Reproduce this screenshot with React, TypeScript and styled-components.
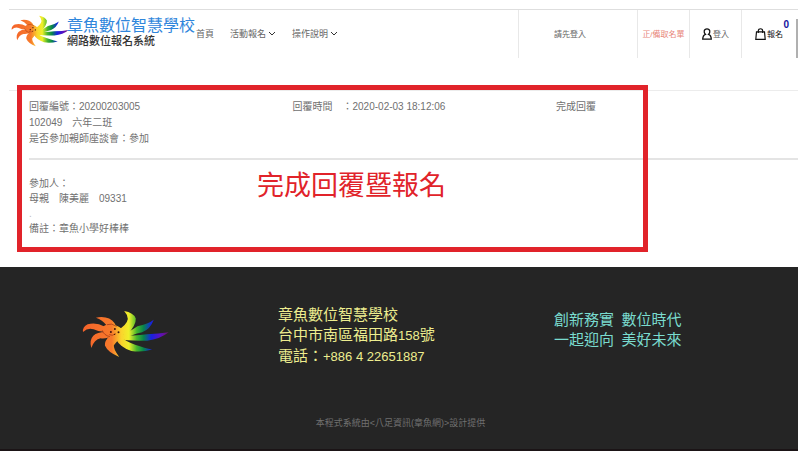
import React from "react";
import styled, { createGlobalStyle } from "styled-components";

const GlobalStyle = createGlobalStyle`
  * { box-sizing: border-box; }
  body {
    margin: 0;
    background: #fff;
    color: #707070;
    font-family: "Liberation Sans", "Noto Sans CJK TC", sans-serif;
    font-size: 10px;
    line-height: 15px;
  }
  p, h1, h2 { margin: 0; font-weight: 400; }
  a { color: inherit; text-decoration: none; }
`;

const Page = styled.div`
  display: flex;
  flex-direction: column;
  min-height: 100vh;
  padding-right: 2px;
`;

const Header = styled.header`
  display: flex;
  height: 49px;
  margin: 9px 0 0 9px;
  border-top: 1px solid #dedede;
`;

const Brand = styled.a`
  display: flex;
  align-items: flex-start;
  padding: 5px 0 0 2px;
`;

const BrandText = styled.span`
  display: flex;
  flex-direction: column;
  margin-left: -2px;
  padding-top: 3px;
`;

const BrandName = styled.span`
  color: #2f86dc;
  font-size: 16px;
  line-height: 16px;
  white-space: nowrap;
`;

const BrandSub = styled.span`
  color: #333;
  font-size: 11px;
  font-weight: 500;
  line-height: 14px;
  white-space: nowrap;
`;

const Nav = styled.nav`
  display: flex;
  flex: 1;
  align-items: center;
  gap: 16px;
  padding-left: 1px;
  font-size: 9px;
  white-space: nowrap;
`;

const NavLink = styled.a`
  color: #666;
`;

const NavButton = styled.button`
  display: flex;
  align-items: center;
  gap: 2px;
  padding: 0;
  border: 0;
  background: none;
  color: #666;
  font: inherit;
`;

const Tools = styled.div`
  display: flex;
  border-right: 2px solid #bdbdbd;
  border-image: linear-gradient(#fff 20%, #b0b0b0 20%) 1;
`;

const Tool = styled.a<{ $wide?: boolean; $color?: string }>`
  display: flex;
  align-items: center;
  justify-content: ${(p) => (p.$wide ? "flex-start" : "center")};
  gap: 1px;
  width: ${(p) => (p.$wide ? 119 : 52)}px;
  padding-left: ${(p) => (p.$wide ? 35 : 0)}px;
  border-left: 1px solid #e8e8e8;
  color: ${(p) => p.$color ?? "#666"};
  font-size: 8px;
  white-space: nowrap;
`;

const Bag = styled(Tool)`
  position: relative;
  width: 55px;
  color: #111;
`;

const Badge = styled.span`
  position: absolute;
  top: 7px;
  right: 7px;
  color: #1414a0;
  font-size: 10px;
  font-weight: 700;
`;

const Main = styled.main`
  position: relative;
  margin: 32px 0 0 9px;
  padding: 8px 0 31px 20px;
  border-top: 1px solid #ececec;
`;

const Details = styled.div`
  display: grid;
  grid-template-columns: 1fr 1fr 242px;
  line-height: 16px;
`;

const Rule = styled.hr`
  height: 2px;
  margin: 11px 0 16px;
  border: 0;
  background: #e4e4e4;
`;

const Faint = styled.p`
  color: #bbb;
`;

const Highlight = styled.div`
  position: absolute;
  top: -6px;
  left: 8px;
  width: 80%;
  height: 167px;
  border: 5px solid #e1232a;
  pointer-events: none;
`;

const HighlightText = styled.h2`
  padding: 81px 0 0 235px;
  color: #e1232a;
  font-size: 27px;
  line-height: 30px;
  white-space: nowrap;
`;

const Footer = styled.footer`
  display: flex;
  flex: 1;
  flex-direction: column;
  border-bottom: 2px solid #1b1416;
  background: #252525;
`;

const FooterGrid = styled.div`
  display: grid;
  grid-template-columns: 278fr 276fr 244fr;
  padding-top: 38px;
  font-size: 15px;
  line-height: 20px;
`;

const FooterLogo = styled.div`
  padding: 5px 0 0 82px;
`;

const Address = styled.address`
  color: #eded8f;
  font-style: normal;
`;

const Digits = styled.span`
  font-size: 13px;
`;

const Slogan = styled.div`
  padding-top: 5px;
  color: #7adccf;
`;

const Credit = styled.p`
  margin-top: 49px;
  padding-left: 3px;
  color: #707070;
  font-size: 9px;
  text-align: center;
`;

function Octopus({ width, height, id }: { width: number; height: number; id: string }) {
  return (
    <svg width={width} height={height} viewBox="35 31 262 142" aria-hidden="true">
      <defs>
        <linearGradient id={id} gradientUnits="userSpaceOnUse" x1="36" y1="0" x2="296" y2="0">
          <stop offset="0" stopColor="#f4622a" />
          <stop offset=".34" stopColor="#f77a2b" />
          <stop offset=".45" stopColor="#fbd32c" />
          <stop offset=".54" stopColor="#eef02a" />
          <stop offset=".63" stopColor="#46b52c" />
          <stop offset=".71" stopColor="#07844d" />
          <stop offset=".8" stopColor="#1722e0" />
          <stop offset=".9" stopColor="#5b10c4" />
          <stop offset="1" stopColor="#6d1263" />
        </linearGradient>
      </defs>
      <g fill={`url(#${id})`}>
        <path d="M140 92Q170 76 173 57Q173 45 162 33Q190 38 197 55Q199 75 168 108Z" />
        <path d="M152 106Q175 98 202 79Q235 72 251 59Q241 87 216 97Q184 104 160 118Z" />
        <path d="M145 103Q190 110 230 103Q267 102 296 97Q270 118 231 122Q180 124 145 118Z" />
        <path d="M145 106Q168 126 195 134Q225 144 246 149Q215 158 184 153Q151 143 136 116Z" />
        <path d="M120 106Q102 123 104 137Q113 158 147 171Q129 147 131 136Q141 125 150 110Z" />
        <path d="M113 96Q83 94 69 107Q56 121 63 144Q72 119 91 115Q110 118 125 105Z" />
        <path d="M104 80Q76 65 52 73Q36 81 38 96Q53 82 70 88Q85 96 104 95Z" />
        <path d="M139 80Q129 56 106 52Q91 49 77 53Q97 60 108 75Z" />
        <path d="M96 82Q107 71 126 73Q148 77 162 94L158 117Q129 121 109 109Q96 98 96 82Z" />
      </g>
      <g fill="none" stroke="#963014" strokeWidth="2">
        <path d="M96 91Q101 106 119 110M110 74Q125 68 139 79M117 104q9 5 20-3" />
      </g>
      <g fill="#40150c">
        <circle cx="122" cy="96" r="3" />
        <circle cx="134" cy="87" r="3" />
        <circle cx="145" cy="97" r="3" />
        <circle cx="133" cy="103" r="2" />
      </g>
    </svg>
  );
}

const Chevron = () => (
  <svg width="8" height="6" viewBox="0 0 8 6" fill="none" stroke="#333" aria-hidden="true">
    <path d="M1 1l3 3 3-3" />
  </svg>
);

const UserIcon = () => (
  <svg width="10" height="12" viewBox="0 0 10 12" fill="none" stroke="#111" strokeWidth="1.3" aria-hidden="true">
    <path d="M3.5 6.4C1.4 4.5 1.7.8 5 .8s3.6 3.700 1.500 5.600C8.300 7 9.200 8.500 9.300 11.200H.7C.8 8.500 1.700 7 3.500 6.400Z" />
  </svg>
);

const BagIcon = () => (
  <svg width="11" height="12" viewBox="0 0 11 12" fill="none" stroke="#111" strokeWidth="1.2" aria-hidden="true">
    <path d="M1.500 3.800h8l.7 7.500H.8ZM3.300 5V3c0-3 4.400-3 4.400 0v2" />
  </svg>
);

export default function App() {
  return (
    <>
      <GlobalStyle />
      <Page>
        <Header>
          <Brand href="#">
            <Octopus width={58} height={32} id="brandRainbow" />
            <BrandText>
              <BrandName>章魚數位智慧學校</BrandName>
              <BrandSub>網路數位報名系統</BrandSub>
            </BrandText>
          </Brand>
          <Nav>
            <NavLink href="#">首頁</NavLink>
            <NavButton type="button">活動報名<Chevron /></NavButton>
            <NavButton type="button">操作說明<Chevron /></NavButton>
          </Nav>
          <Tools>
            <Tool href="#" $wide>請先登入</Tool>
            <Tool href="#" $color="#e8877c">正/備取名單</Tool>
            <Tool href="#"><UserIcon />登入</Tool>
            <Bag href="#"><BagIcon />報名<Badge>0</Badge></Bag>
          </Tools>
        </Header>

        <Main>
          <Details>
            <div>
              <p>回覆編號：20200203005</p>
              <p>102049　六年二班</p>
              <p>是否參加親師座談會：參加</p>
            </div>
            <p>回覆時間　：2020-02-03 18:12:06</p>
            <p>完成回覆</p>
          </Details>
          <Rule />
          <p>參加人：</p>
          <p>母親　陳美麗　09331</p>
          <Faint>.</Faint>
          <p>備註：章魚小學好棒棒</p>
          <Highlight>
            <HighlightText>完成回覆暨報名</HighlightText>
          </Highlight>
        </Main>

        <Footer>
          <FooterGrid>
            <FooterLogo><Octopus width={87} height={48} id="footerRainbow" /></FooterLogo>
            <Address>
              <p>章魚數位智慧學校</p>
              <p>台中市南區福田路<Digits>158</Digits>號</p>
              <p>電話：<Digits>+886 4 22651887</Digits></p>
            </Address>
            <Slogan>
              <p>創新務實&ensp;數位時代</p>
              <p>一起迎向&ensp;美好未來</p>
            </Slogan>
          </FooterGrid>
          <Credit>本程式系統由&lt;八足資訊(章魚網)&gt;設計提供</Credit>
        </Footer>
      </Page>
    </>
  );
}
